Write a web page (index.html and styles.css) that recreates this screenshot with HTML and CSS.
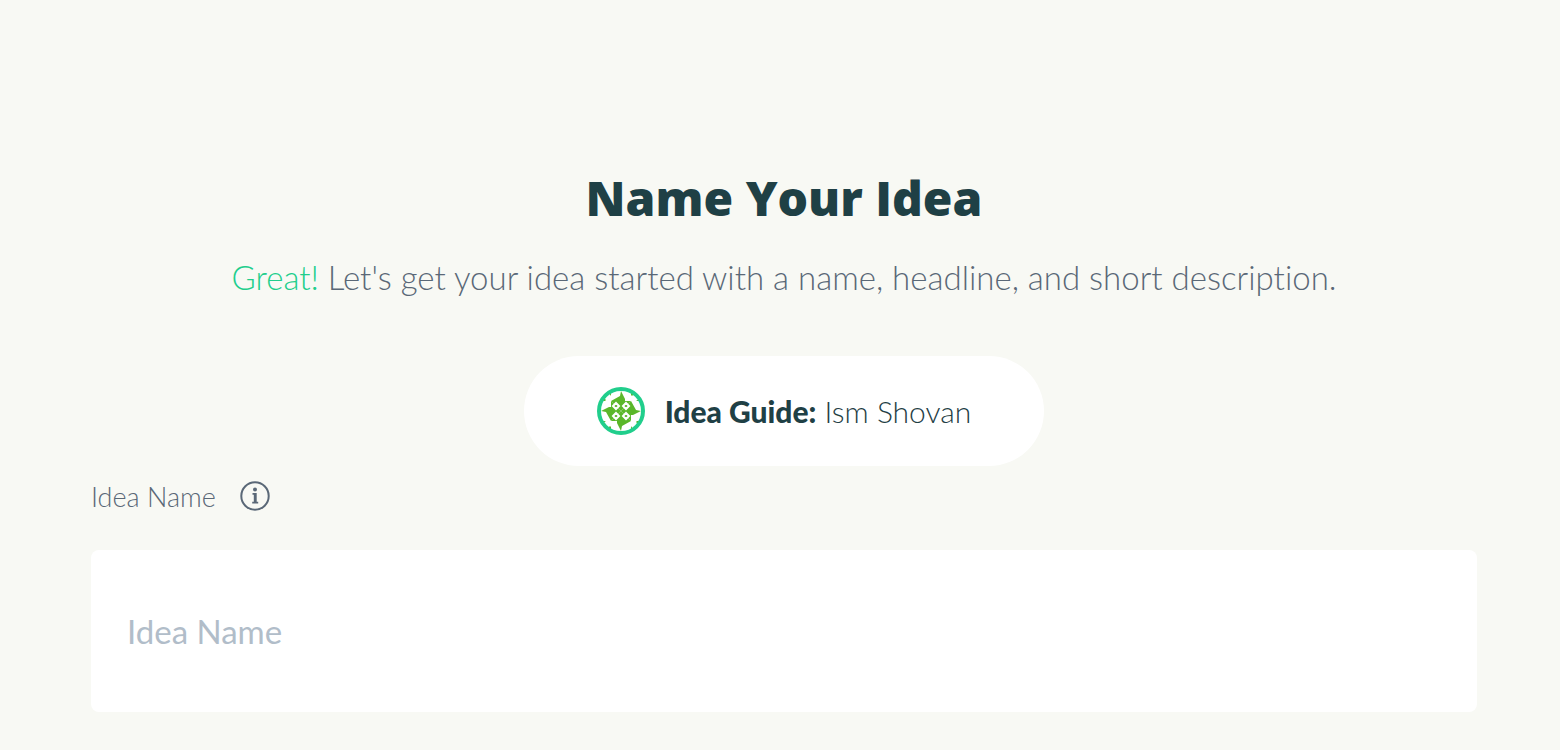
FILE: index.html
```
<!DOCTYPE html>
<html lang="en">

<head>
  <meta charset="UTF-8">
  <meta name="viewport" content="width=device-width, initial-scale=1.0">
  <title>Name Your Idea</title>
  <link rel="stylesheet" href="styles.css">
</head>

<body>
  <main class="page">
    <header class="intro">
      <h1>Name Your Idea</h1>
      <p class="subtitle"><span class="highlight">Great!</span> Let's get your idea started with a name, headline, and short description.</p>

      <div class="guide">
        <svg class="avatar" viewBox="0 0 48 48" aria-hidden="true">
          <circle cx="24" cy="24" r="22" fill="#fff" />
          <g fill="#5ab729">
            <path id="arm" d="M24 24L14 14L23 9L24 4L28 12L28 14L34 14Z" />
            <use href="#arm" transform="rotate(90 24 24)" />
            <use href="#arm" transform="rotate(180 24 24)" />
            <use href="#arm" transform="rotate(270 24 24)" />
            <path id="tick" d="M12 6h2v3zM34 5v4l2-2zM6 13h3l-2-2z" />
            <use href="#tick" transform="rotate(90 24 24)" />
            <use href="#tick" transform="rotate(180 24 24)" />
            <use href="#tick" transform="rotate(270 24 24)" />
          </g>
          <path d="M19 16l3 3-3 3-3-3zM29 16l3 3-3 3-3-3zM19 26l3 3-3 3-3-3zM29 26l3 3-3 3-3-3z" fill="#5ab729" stroke="#fff" stroke-width="2" />
          <circle cx="24" cy="24" r="22" fill="none" stroke="#21ce8c" stroke-width="4" />
        </svg>
        <p><strong>Idea Guide:</strong> Ism Shovan</p>
      </div>
    </header>

    <form class="idea-form">
      <div class="label-row">
        <label for="ideaName">Idea Name</label>
        <button type="button" class="info" aria-label="About the idea name">
          <svg viewBox="0 0 30 30" aria-hidden="true">
            <circle cx="15" cy="15" r="13.700" fill="none" stroke="#5a6877" stroke-width="2" />
            <circle cx="15" cy="8.500" r="2" fill="#5a6877" />
            <path d="M12.500 12h4.200v8.800h1.500v1.700h-6v-1.700h1.600v-7.100h-1.300z" fill="#5a6877" />
          </svg>
        </button>
      </div>
      <input type="text" id="ideaName" name="ideaName" placeholder="Idea Name">
    </form>
  </main>
</body>

</html>
```
FILE: styles.css
```
body {
  margin: 0;
  background: #f8f9f4;
  color: #5a6877;
  font-family: Lato, "Open Sans", sans-serif;
  font-variant-ligatures: none;
}

.page {
  padding: 168px 83px 38px 91px;
}

.intro {
  display: flex;
  flex-direction: column;
  align-items: center;
  text-align: center;
}

h1 {
  margin: 0;
  color: #1f4045;
  font-family: "Open Sans", sans-serif;
  font-size: 48px;
  font-weight: 800;
  line-height: 60px;
}

.subtitle {
  margin: 27px 0 57px;
  font-size: 33px;
  font-weight: 300;
  line-height: 44px;
}

.highlight {
  color: #21ce8c;
}

.guide {
  display: flex;
  align-items: center;
  gap: 20px;
  padding: 31px 73px;
  border-radius: 55px;
  background: #fff;
  color: #1f4045;
  font-size: 30px;
  font-weight: 300;
}

.guide p {
  margin: 0;
  line-height: 48px;
}

.guide strong {
  font-weight: 900;
}

.avatar {
  width: 48px;
  height: 48px;
}

.label-row {
  display: flex;
  align-items: center;
  gap: 24px;
  height: 60px;
  margin-bottom: 24px;
}

label {
  font-size: 27px;
  font-weight: 300;
}

.info {
  width: 30px;
  height: 30px;
  padding: 0;
  border: none;
  background: none;
  cursor: pointer;
}

.info svg {
  display: block;
}

input {
  display: block;
  box-sizing: border-box;
  width: 100%;
  padding: 56px 36px;
  border: none;
  border-radius: 8px;
  background: #fff;
  color: #1f4045;
  font-family: inherit;
  font-size: 33px;
  line-height: 50px;
}

input::placeholder {
  color: #b1bdc9;
}
```
